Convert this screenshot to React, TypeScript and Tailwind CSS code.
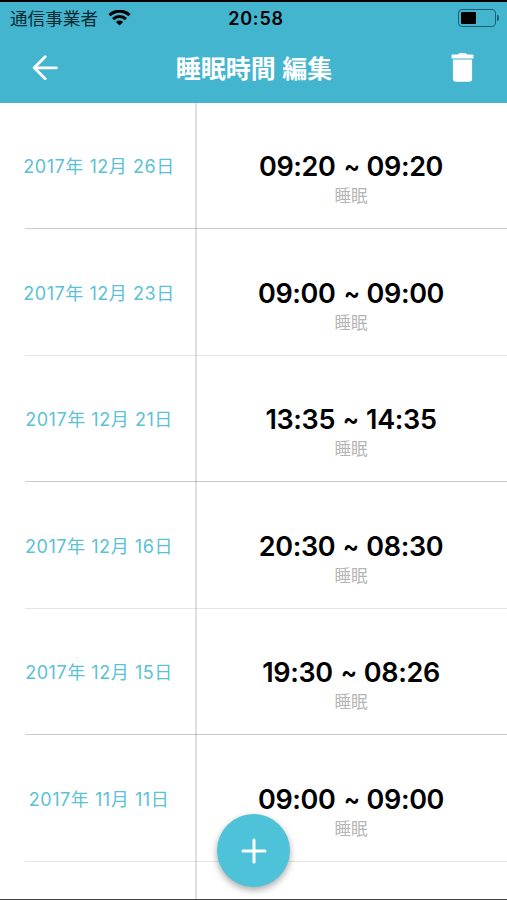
import clsx from "clsx";

type SleepRecord = {
  date: string;
  start: string;
  end: string;
};

const RECORDS: SleepRecord[] = [
  { date: "2017年 12月 26日", start: "09:20", end: "09:20" },
  { date: "2017年 12月 23日", start: "09:00", end: "09:00" },
  { date: "2017年 12月 21日", start: "13:35", end: "14:35" },
  { date: "2017年 12月 16日", start: "20:30", end: "08:30" },
  { date: "2017年 12月 15日", start: "19:30", end: "08:26" },
  { date: "2017年 11月 11日", start: "09:00", end: "09:00" },
];

function StatusBar() {
  return (
    <div className="grid h-[32px] grid-cols-[1fr_auto_1fr] items-center pr-2 pl-[10px] text-[#082a33]">
      <div className="flex items-center gap-[10px]">
        <span className="pt-px text-[17.6px] leading-none">通信事業者</span>
        <svg width="23" height="16" viewBox="0 0 23 16" fill="none" stroke="#000" strokeWidth="3.1">
          <path d="M1.5 5.2a14.2 14.2 0 0 1 20 0" />
          <path d="M5.1 9.2a9.1 9.1 0 0 1 12.8 0" />
          <path d="M11.5 15.6 7.9 12a5.1 5.1 0 0 1 7.2 0Z" fill="#000" stroke="none" />
        </svg>
      </div>
      <span className="pt-[2px] pl-[3px] text-[18px] leading-none font-semibold tracking-[0.8px] text-black">20:58</span>
      <div className="flex items-center justify-end">
        <div className="-mt-px h-[18px] w-[38px] rounded-[4px] border border-[#1d6070] p-[2px]">
          <div className="h-full w-[15px] rounded-[1px] bg-black" />
        </div>
        <div className="ml-px h-[6px] w-[2px] rounded-r-full bg-[#1d6070]" />
      </div>
    </div>
  );
}

function NavBar() {
  return (
    <div className="grid h-[68px] grid-cols-[1fr_auto_1fr] items-center pr-[33px] pl-[32px] text-white">
      <button type="button" aria-label="戻る">
        <svg width="27" height="26" viewBox="0 0 27 26" fill="none" stroke="currentColor" strokeWidth="2.8" strokeLinecap="round" strokeLinejoin="round">
          <path d="M13.2 1.8 2.2 12.8l11 11M2.5 12.8h22" />
        </svg>
      </button>
      <h1 className="pt-[3px] pl-[2px] text-[25px] leading-none font-semibold">睡眠時間 編集</h1>
      <button type="button" aria-label="削除" className="-mt-px justify-self-end">
        <svg width="23" height="29" viewBox="0 0 23 29" fill="currentColor">
          <path d="M7.5 1.1Q8 0 9 0h5q1 0 1.5 1.1l.3.5h5.7q1 0 1 1v2.9H.5V2.6q0-1 1-1h5.7Z" />
          <path d="M1.9 6.6h19.2v18.9a3.2 3.2 0 0 1-3.2 3.2H5.1a3.2 3.2 0 0 1-3.2-3.2Z" />
        </svg>
      </button>
    </div>
  );
}

function RecordRow({ record, strong }: { record: SleepRecord; strong: boolean }) {
  return (
    <li
      className={clsx(
        "ml-[25px] flex h-[126.5px] border-b pt-[50.5px]",
        strong ? "border-[#cccccc]" : "border-[#e6e6e6]"
      )}
    >
      <div className="w-[148px] shrink-0 text-center text-[18px] leading-[28px] tracking-[0.55px] whitespace-nowrap text-[#5bc1d6]">
        <span className="-mx-2">{record.date}</span>
      </div>
      <div className="ml-[22px] flex-1 text-center">
        <div className="text-[27px] leading-[28px] font-semibold tracking-[-0.35px] text-black">
          {record.start}
          <span className="mx-[7px] inline-block w-[17px] scale-x-90 text-center tracking-normal">~</span>
          {record.end}
        </div>
        <div className="mt-[5px] text-[16.5px] leading-[20px] text-[#b5b5b5]">睡眠</div>
      </div>
    </li>
  );
}

export default function App() {
  return (
    <div className="relative flex h-[900px] w-[507px] flex-col overflow-hidden border-b border-[#444] bg-white font-['Inter','Noto_Sans_CJK_JP',sans-serif]">
      <header className="h-[102.5px] shrink-0 border-t-[2px] border-black bg-[#43b5cf]">
        <StatusBar />
        <NavBar />
      </header>

      <main className="relative min-h-0 flex-1 overflow-hidden">
        <ul>
          {RECORDS.map((r, i) => (
            <RecordRow key={r.date} record={r} strong={i % 2 === 0} />
          ))}
        </ul>
        {/* Divider runs past the last row */}
        <div className="absolute inset-y-0 left-[195px] w-[2px] bg-black/12" />
      </main>

      {/* Add button */}
      <button
        type="button"
        aria-label="追加"
        className="absolute bottom-[12px] left-[217px] flex size-[73px] items-center justify-center rounded-full bg-[#4dc2d9] text-white shadow-[0_3px_7px_rgba(0,0,0,0.35)]"
      >
        <svg width="26" height="26" viewBox="0 0 26 26" fill="none" stroke="currentColor" strokeWidth="3" strokeLinecap="round">
          <path d="M13 2v22M2 13h22" />
        </svg>
      </button>
    </div>
  );
}
